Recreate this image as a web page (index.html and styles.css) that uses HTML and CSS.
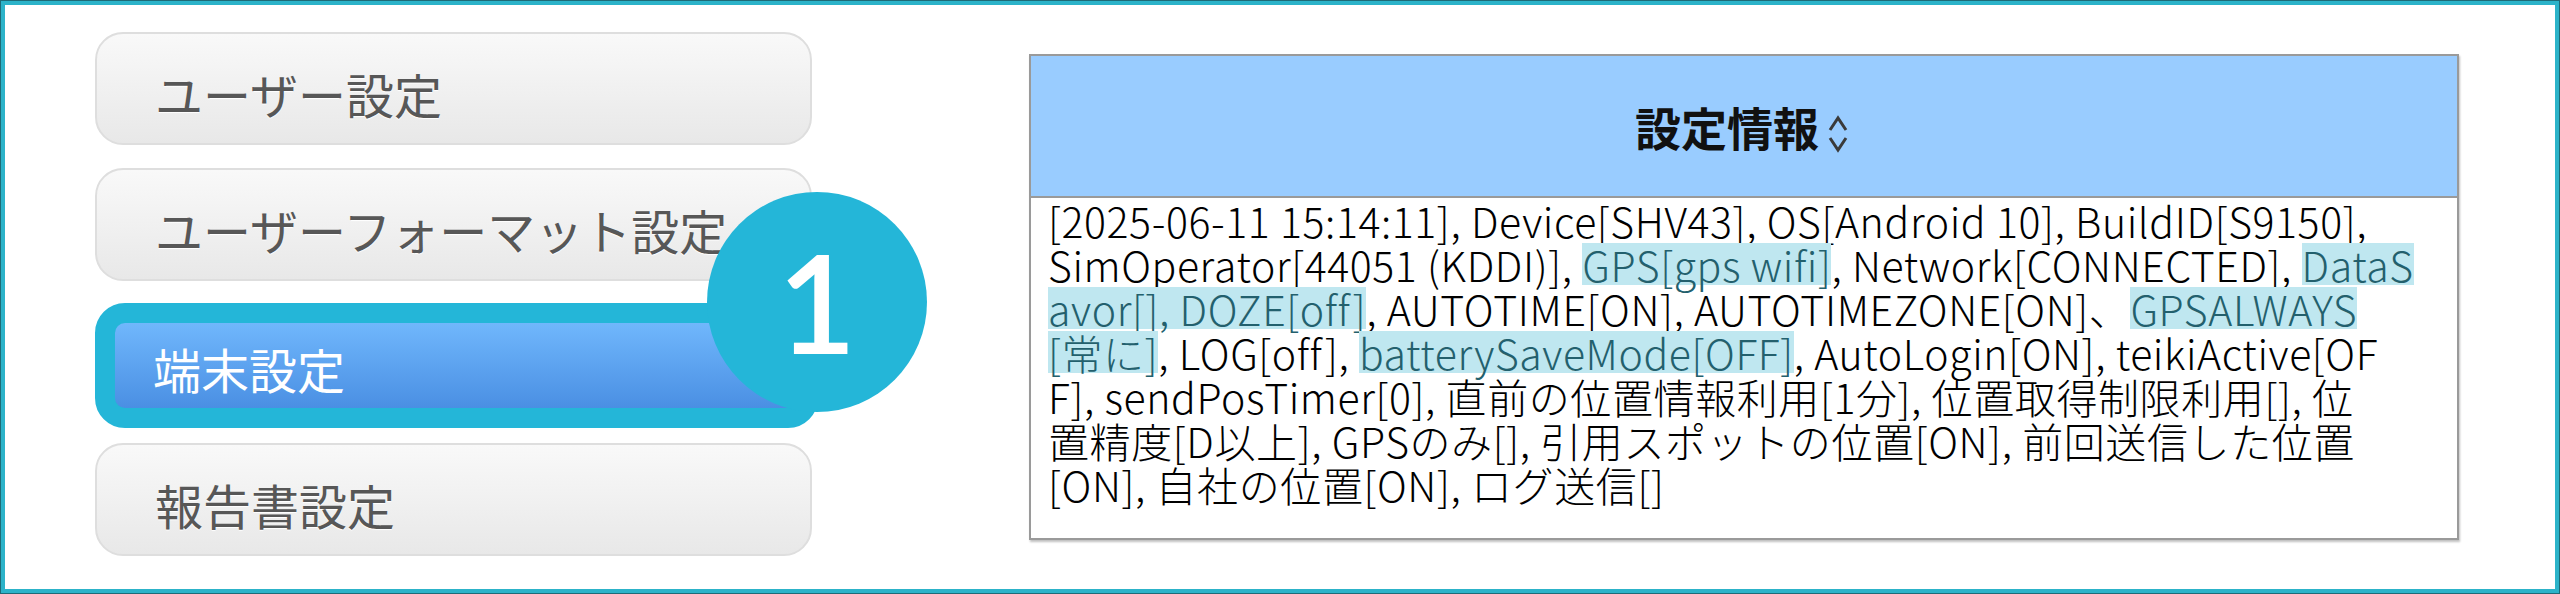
FILE: index.html
```html
<!DOCTYPE html>
<html lang="ja">
<head>
    <meta charset="UTF-8">
    <meta name="viewport" content="width=device-width, initial-scale=1.0">
    <title>端末設定</title>
    <link rel="stylesheet" href="styles.css">
</head>
<body>
    <div class="screen">
        <nav class="menu">
            <a href="#" class="menu-item">ユーザー設定</a>
            <a href="#" class="menu-item">ユーザーフォーマット設定</a>
            <a href="#" class="menu-item active">端末設定</a>
            <a href="#" class="menu-item">報告書設定</a>
            <span class="step-badge">1</span>
        </nav>

        <table class="info-table">
            <thead>
                <tr>
                    <th>
                        設定情報<svg class="sort-icon" viewBox="0 0 30 46" width="30" height="46">
                            <polyline points="7,19 15,7 23,19" />
                            <polyline points="7,27 15,39 23,27" />
                        </svg>
                    </th>
                </tr>
            </thead>
            <tbody>
                <tr>
                    <td>[2025-06-11 15:14:11], Device[SHV43], OS[Android 10], BuildID[S9150],<br>
                        SimOperator[44051 (KDDI)], <span class="hl">GPS[gps wifi]</span>, Network[CONNECTED], <span class="hl">DataS<br>
                        avor[], DOZE[off]</span>, AUTOTIME[ON], AUTOTIMEZONE[ON]、<span class="hl">GPSALWAYS<br>
                        [常に]</span>, LOG[off], <span class="hl">batterySaveMode[OFF]</span>, AutoLogin[ON], teikiActive[OF<br>
                        F], sendPosTimer[0], 直前の位置情報利用[1分], 位置取得制限利用[], 位<br>
                        置精度[D以上], GPSのみ[], 引用スポットの位置[ON], 前回送信した位置<br>
                        [ON], 自社の位置[ON], ログ送信[]</td>
                </tr>
            </tbody>
        </table>
    </div>
</body>
</html>
```

FILE: styles.css
```css
body {
    margin: 0;
    font-family: "Noto Sans CJK JP", "Liberation Sans", sans-serif;
    background: #fff;
    color: #111;
}
.screen {
    box-sizing: border-box;
    width: 2560px;
    height: 594px;
    border: 5px solid #2cb3c9;
    outline: 1px solid #1e6b77;
    outline-offset: -1px;
    padding: 27px 96px 0 90px;
    display: flex;
    align-items: flex-start;
    gap: 217px;
}
.menu {
    position: relative;
    width: 717px;
    flex-shrink: 0;
    display: flex;
    flex-direction: column;
    gap: 23px;
}
.menu-item {
    box-sizing: border-box;
    height: 113px;
    display: flex;
    align-items: center;
    padding: 8px 0 0 58px;
    border: 2px solid #dedede;
    border-radius: 28px;
    background: linear-gradient(#f9f9f9, #e8e8e8);
    color: #575757;
    font-size: 48px;
    text-decoration: none;
    text-shadow: 0 1px 1px #fff;
    white-space: nowrap;
    overflow: hidden;
}
.menu-item.active {
    height: 125px;
    margin: -1px -6px -8px 0;
    padding: 4px 0 0 38px;
    border: 20px solid #24b6d8;
    border-radius: 30px;
    background: linear-gradient(#70b7fc, #4a8fe3);
    color: #fff;
    text-shadow: none;
}
.step-badge {
    position: absolute;
    left: 612px;
    top: 160px;
    width: 220px;
    height: 220px;
    border-radius: 50%;
    background: #24b6d8;
    color: #fff;
    font-family: "Lato", "DejaVu Sans", sans-serif;
    font-weight: 600;
    font-size: 136px;
    line-height: 220px;
    text-align: center;
}
.info-table {
    width: 1430px;
    margin-top: 22px;
    border-collapse: collapse;
    border: 2px solid #9a9a9a;
    box-shadow: 1px 2px 2px rgba(0, 0, 0, 0.25);
}
.info-table th {
    height: 140px;
    padding: 0;
    background: #99ccff;
    border-bottom: 2px solid #9a9a9a;
    font-size: 46px;
    font-weight: 700;
    color: #111;
}
.sort-icon {
    margin-left: 4px;
    vertical-align: middle;
    fill: none;
    stroke: #3a3a3a;
    stroke-width: 3;
}
.info-table td {
    height: 342px;
    box-sizing: border-box;
    padding: 0 14px 0 17px;
    vertical-align: top;
    font-size: 41px;
    font-weight: 300;
    letter-spacing: 0.6px;
    line-height: 44px;
    white-space: nowrap;
    color: #000;
}
.hl {
    background: linear-gradient(transparent 9px, #bfe7f0 9px, #bfe7f0 calc(100% - 9px), transparent calc(100% - 9px));
    color: #23606d;
}
```
